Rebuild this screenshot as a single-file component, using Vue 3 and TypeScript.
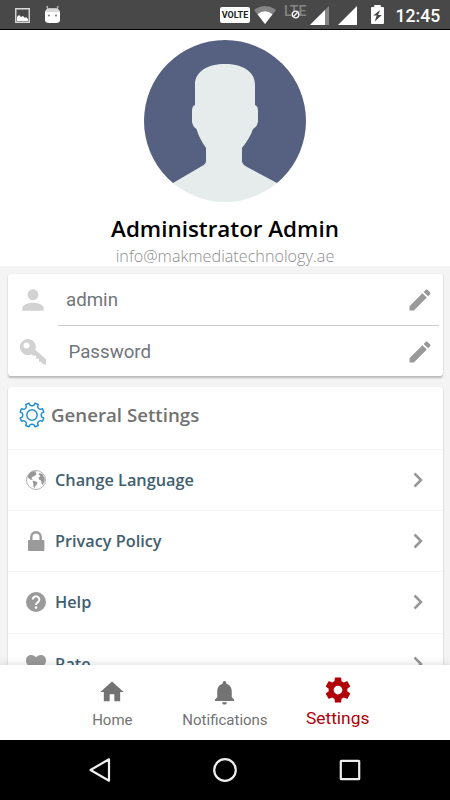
<script setup lang="ts">
interface SettingRow {
  label: string
  icon: 'globe' | 'lock' | 'help' | 'heart'
}

const rows: SettingRow[] = [
  { label: 'Change Language', icon: 'globe' },
  { label: 'Privacy Policy', icon: 'lock' },
  { label: 'Help', icon: 'help' },
  { label: 'Rate', icon: 'heart' },
]

const pencil =
  'M3 17.25V21h3.75L17.81 9.94l-3.75-3.75L3 17.25zM20.71 7.04c.39-.39.39-1.02 0-1.41l-2.34-2.34c-.39-.39-1.02-.39-1.41 0l-1.83 1.83 3.75 3.75 1.83-1.83z'

// Outline of an eight-toothed cog centred on 0,0
function cogPath(): string {
  const point = (radius: number, degrees: number): string => {
    const a = (degrees * Math.PI) / 180
    return `${(radius * Math.cos(a)).toFixed(2)} ${(radius * Math.sin(a)).toFixed(2)}`
  }
  let d = ''
  for (let i = 0; i < 8; i++) {
    const c = i * 45 + 22.5
    d += `${i === 0 ? 'M' : 'L'}${point(9.9, c - 12)}L${point(12.2, c - 8)}`
    d += `L${point(12.2, c + 8)}L${point(9.9, c + 12)}Q${point(8.6, c + 22.5)} ${point(9.9, c + 33)}`
  }
  return d + 'Z'
}
const cog = cogPath()
</script>

<template>
  <div class="screen">
    <header class="status">
      <svg class="s-picture" width="15" height="15" viewBox="0 0 15 15">
        <path d="M.75.75h13.5v13.5H.75z" fill="none" stroke="#d9d9d9" stroke-width="1.4" />
        <path d="M2 13V9l2-2 2 2 2-1 2 2 1-1 2 2v2z" fill="#fff" />
      </svg>
      <svg class="s-droid" width="17" height="19" viewBox="0 0 17 19">
        <path d="M4 5L3 1M13 5l1-4" stroke="#bbb" stroke-width="1.4" />
        <path d="M1 8Q1 4 5 3.4h7Q16 4 16 8v7q0 3-4 3H5q-4 0-4-3z" fill="#fff" />
        <path d="M1.5 7Q2 4 5 3.4h7q3 .6 3.500 3.600z" fill="#d8d8d8" />
        <circle cx="5" cy="10.500" r="1" fill="#777" /><circle cx="12" cy="10.500" r="1" fill="#777" />
      </svg>
      <span class="volte">VOLTE</span>
      <svg class="s-wifi" width="22" height="18" viewBox="0 0 22 18">
        <path d="M0 4Q11-4 22 4L11 18z" fill="#858585" />
        <path d="M3.500 8.300Q11 2.300 18.500 8.300L11 18z" fill="#fff" />
      </svg>
      <span class="lte">LTE
        <svg width="9" height="9" viewBox="0 0 9 9">
          <circle cx="4.500" cy="4.500" r="3.300" fill="#484848" stroke="#fff" stroke-width="1.300" />
          <path d="M2.500 6.500l4-4" stroke="#fff" stroke-width="1.200" />
        </svg>
      </span>
      <svg class="s-sig1" width="19" height="19" viewBox="0 0 19 19">
        <path d="M0 19L19 0v19z" fill="#858585" /><path d="M0 19L15 4v15z" fill="#fff" />
      </svg>
      <svg class="s-sig2" width="19" height="19" viewBox="0 0 19 19"><path d="M0 19L19 0v19z" fill="#fff" /></svg>
      <svg class="s-batt" width="13" height="19" viewBox="0 0 12 19" preserveAspectRatio="none">
        <path d="M0 3q0-1 1-1h2V0h6v2h2q1 0 1 1v15q0 1-1 1H1q-1 0-1-1z" fill="#fff" />
        <path d="M8.500 5L2 10.500h3.200L3.500 16.500 10 10H6.600z" fill="#484848" />
      </svg>
      <span class="clock">12:45</span>
    </header>

    <section class="profile">
      <svg class="avatar" viewBox="0 0 162 162">
        <defs><clipPath id="disc"><circle cx="81" cy="81" r="81" /></clipPath></defs>
        <g clip-path="url(#disc)">
          <path d="M0 0h162v143H0z" fill="#566080" />
          <path
            d="M81 24C98 24 111 31 111 45V65Q114 66 114 71V82Q113 87 109 89Q106 98 98 108V122Q99 125 103 127L133 143V162H29V143L58 126Q62 124 62 121V108Q55 98 52.500 89Q49 87 48 82V71Q48 66 51 65V45C51 31 64 24 81 24Z"
            fill="#e6ecec"
          />
        </g>
      </svg>
      <h1>Administrator Admin</h1>
      <p class="email">info@makmediatechnology.ae</p>
    </section>

    <main class="content">
      <section class="card account">
        <div class="field">
          <svg class="f-icon" width="32" height="32" viewBox="0 0 24 24">
            <path d="M12 12c2.210 0 4-1.790 4-4s-1.790-4-4-4-4 1.790-4 4 1.790 4 4 4zm0 2c-2.670 0-8 1.340-8 4v2h16v-2c0-2.660-5.330-4-8-4z" fill="#d2d2d2" />
          </svg>
          <span class="f-text">admin</span>
          <svg class="edit" width="28" height="28" viewBox="0 0 24 24"><path :d="pencil" /></svg>
        </div>
        <div class="field">
          <svg class="f-icon key" width="26" height="26" viewBox="0 0 26 26">
            <path
              fill-rule="evenodd"
              d="M8 0a8 8 0 1 0 3.400 15.200L13 16.800h3v3h3v3h2L23.500 25.500H26v-5.300L15.300 10.800A8 8 0 0 0 8 0zM6.500 3.500a3 3 0 1 1 0 6 3 3 0 0 1 0-6z"
              fill="#d2d2d2"
            />
          </svg>
          <span class="f-text password">Password</span>
          <svg class="edit" width="28" height="28" viewBox="0 0 24 24"><path :d="pencil" /></svg>
        </div>
      </section>

      <section class="card general">
        <div class="heading">
          <svg width="26" height="26" viewBox="-13 -13 26 26">
            <g fill="none" stroke="#2090d2" stroke-width="1.500" stroke-linejoin="round">
              <path :d="cog" /><circle r="5.200" />
            </g>
          </svg>
          <h2>General Settings</h2>
        </div>
        <div v-for="row in rows" :key="row.label" class="row">
          <svg class="r-icon" width="20" height="20" viewBox="0 0 20 20">
            <g v-if="row.icon === 'globe'">
              <circle cx="10" cy="10" r="9.500" fill="#fff" stroke="#aaa" stroke-width=".9" />
              <path d="M1.500 7Q3 2.500 7 1.200l3.500.2L9.500 3l1.300 1L8.500 6 7 6.500 5.500 8 7 9.500 4.500 9.800 3 8.300zM6.500 10.800l2.500.1 2.700 1.900-1.200 2.200-1.500 1.300L8.500 18.800 7.300 16l.1-2.200zM12.500 4.500L13.700 3 16.300 4l2.300 4v3l-1.800 3.700-1.200-.7-.4-3.300-1.900-1-.8-2 2-1.700z" fill="#989898" />
            </g>
            <g v-else-if="row.icon === 'lock'">
              <path d="M5.300 10V6a4.700 4.700 0 0 1 9.400 0v4" fill="none" stroke="#9a9a9a" stroke-width="2.400" />
              <rect x="2" y="9" width="16.400" height="11" rx="1" fill="#9a9a9a" />
            </g>
            <g v-else-if="row.icon === 'help'">
              <circle cx="10" cy="10" r="10" fill="#9a9a9a" />
              <path d="M6.700 7.600A3.300 3.300 0 1 1 12 10.200Q10 11.500 10 13" fill="none" stroke="#fff" stroke-width="2" />
              <circle cx="10" cy="15.600" r="1.300" fill="#fff" />
            </g>
            <path v-else d="M10 19L2 11.500C-2 7 .5 1 5 1q3 0 5 2.300Q12 1 15 1c4.500 0 7 6 3 10.500z" fill="#9a9a9a" />
          </svg>
          <span class="r-label">{{ row.label }}</span>
          <svg class="chevron" width="10" height="16" viewBox="0 0 10 16">
            <path d="M1.500 1.500L8 8l-6.500 6.500" fill="none" stroke="#979797" stroke-width="2.500" />
          </svg>
        </div>
      </section>
    </main>

    <nav class="tabs">
      <div class="tab">
        <svg width="28" height="28" viewBox="0 0 24 24"><path d="M10 20v-6h4v6h5v-8h3L12 3 2 12h3v8z" /></svg>
        <span>Home</span>
      </div>
      <div class="tab">
        <svg width="29" height="29" viewBox="0 0 24 24">
          <path d="M12 22c1.100 0 2-.9 2-2h-4c0 1.100.9 2 2 2zm6-6v-5c0-3.070-1.640-5.640-4.500-6.320V4c0-.83-.67-1.500-1.500-1.500s-1.500.67-1.500 1.500v.68C7.630 5.360 6 7.920 6 11v5l-2 2v1h16v-1l-2-2z" />
        </svg>
        <span>Notifications</span>
      </div>
      <div class="tab active">
        <svg width="30" height="30" viewBox="0 0 24 24">
          <path d="M19.430 12.980c.04-.32.07-.64.07-.98s-.03-.66-.07-.98l2.110-1.650c.19-.15.24-.42.12-.64l-2-3.460c-.12-.22-.39-.3-.61-.22l-2.490 1c-.52-.4-1.080-.73-1.690-.98l-.38-2.650C14.460 2.180 14.250 2 14 2h-4c-.25 0-.46.18-.49.42l-.38 2.650c-.61.25-1.170.59-1.690.98l-2.490-1c-.23-.09-.49 0-.61.22l-2 3.460c-.13.22-.07.49.12.64l2.110 1.650c-.04.32-.07.65-.07.98s.03.66.07.98l-2.110 1.650c-.19.15-.24.42-.12.64l2 3.460c.12.22.39.3.61.22l2.490-1c.52.4 1.080.73 1.690.98l.38 2.650c.03.24.24.42.49.42h4c.25 0 .46-.18.49-.42l.38-2.650c.61-.25 1.170-.59 1.690-.98l2.490 1c.23.09.49 0 .61-.22l2-3.460c.12-.22.07-.49-.12-.64l-2.110-1.650zM12 15.500c-1.930 0-3.500-1.570-3.500-3.500s1.570-3.500 3.500-3.500 3.500 1.570 3.500 3.500-1.570 3.500-3.500 3.500z" />
        </svg>
        <span>Settings</span>
      </div>
    </nav>

    <footer class="system">
      <svg width="26" height="26" viewBox="0 0 26 26"><path d="M22 2.300v21.400L3.500 13z" /></svg>
      <svg width="26" height="26" viewBox="0 0 26 26"><circle cx="13" cy="13" r="10.800" /></svg>
      <svg width="26" height="26" viewBox="0 0 26 26"><rect x="3.800" y="3.800" width="18.400" height="18.400" rx=".5" /></svg>
    </footer>
  </div>
</template>

<style>
body {
  margin: 0;
  overflow: hidden;
}
</style>

<style scoped>
.screen {
  width: 450px;
  height: 800px;
  display: flex;
  flex-direction: column;
  background: #f4f4f4;
  font-family: Roboto, sans-serif;
  overflow: hidden;
}
svg {
  display: block;
  flex: none;
}
h1,
h2,
p {
  margin: 0;
}
.status {
  box-sizing: border-box;
  flex: none;
  height: 30px;
  display: flex;
  align-items: flex-start;
  background: #484848;
  border-bottom: 1px solid #000;
  color: #fff;
}
.s-picture {
  margin: 7.500px 0 0 15px;
}
.s-droid {
  margin: 4.500px 0 0 14px;
}
.volte {
  box-sizing: border-box;
  width: 30px;
  height: 16px;
  margin: 7px 0 0 159px;
  border-radius: 2px;
  background: #fff;
  color: #222;
  font-size: 9px;
  font-weight: 700;
  line-height: 16.500px;
  text-align: center;
}
.s-wifi {
  margin: 6px 0 0 4px;
}
.lte {
  position: relative;
  width: 22px;
  margin: 2.500px 0 0 8px;
  color: #858585;
  font-size: 14px;
  font-weight: 500;
  line-height: 17px;
  white-space: nowrap;
}
.lte svg {
  position: absolute;
  left: 7px;
  top: 7.500px;
}
.s-sig1 {
  margin: 6px 0 0 4px;
}
.s-sig2 {
  margin: 6px 0 0 8.500px;
}
.s-batt {
  margin: 5px 0 0 14px;
}
.clock {
  margin: 5px 0 0 12px;
  font-size: 17.600px;
  font-weight: 500;
  line-height: 22px;
}
.profile {
  box-sizing: border-box;
  flex: none;
  height: 236px;
  padding-top: 10px;
  display: flex;
  flex-direction: column;
  align-items: center;
  background: #fff;
}
.avatar {
  width: 162px;
  height: 162px;
}
h1 {
  margin-top: 12px;
  font: 600 22.400px/30px 'Open Sans', sans-serif;
  color: #000;
}
.email {
  font: 300 16.200px/25px 'Open Sans', sans-serif;
  color: #8c8c8c;
}
.content {
  flex: 1;
  min-height: 0;
  padding: 8px 7.500px 0;
  display: flex;
  flex-direction: column;
  gap: 11px;
  overflow: hidden;
}
.card {
  flex: none;
  background: #fff;
  border-radius: 3px;
  box-shadow: 0 1.500px 2px rgba(0, 0, 0, 0.24);
}
.account {
  height: 102px;
}
.field {
  display: flex;
  align-items: center;
  height: 51px;
}
.field + .field {
  position: relative;
  height: 53px;
}
.field + .field::before {
  content: '';
  position: absolute;
  left: 50px;
  right: 4px;
  top: 0;
  height: 1px;
  background: #ccc;
}
.f-icon {
  margin-left: 9.500px;
}
.f-icon.key {
  margin-left: 12px;
}
.f-text {
  margin-left: 17px;
  font-size: 18.700px;
  line-height: 24px;
  color: #71757a;
}
.f-text.password {
  margin-left: 23px;
}
.edit {
  margin: 0 8.500px 0 auto;
  fill: #999;
}
.general {
  height: 310px;
}
.heading {
  box-sizing: border-box;
  height: 62px;
  padding: 0 0 6px 11.500px;
  display: flex;
  align-items: center;
}
h2 {
  margin-left: 6px;
  font: 600 18.700px/26px 'Open Sans', sans-serif;
  color: #727272;
}
.row {
  box-sizing: border-box;
  height: 61.200px;
  padding: 0 20px 0 18.500px;
  display: flex;
  align-items: center;
  border-top: 1.500px solid #f4f4f4;
}
.r-label {
  margin-left: 9px;
  font: 600 16.300px/24px 'Open Sans', sans-serif;
  color: #3f606f;
}
.chevron {
  margin-left: auto;
}
.tabs {
  position: relative;
  box-sizing: border-box;
  flex: none;
  height: 75px;
  padding: 0 56px;
  display: grid;
  grid-template-columns: repeat(3, 1fr);
  background: #fff;
  box-shadow: 0 0 9px rgba(0, 0, 0, 0.16);
}
.tab {
  display: flex;
  flex-direction: column;
  align-items: center;
  padding-top: 13px;
  color: #737373;
  fill: #737373;
}
.tab span {
  margin-top: auto;
  margin-bottom: 10px;
  font-size: 15px;
  line-height: 20px;
}
.tab.active {
  padding-top: 10px;
  color: #b00008;
  fill: #b00008;
}
.tab.active span {
  margin-bottom: 11px;
  font-size: 17.400px;
  line-height: 22px;
}
.system {
  flex: none;
  height: 60px;
  display: flex;
  align-items: center;
  justify-content: center;
  gap: 99px;
  background: #000;
  fill: none;
  stroke: #eee;
  stroke-width: 2.200px;
  stroke-linejoin: round;
}
</style>
